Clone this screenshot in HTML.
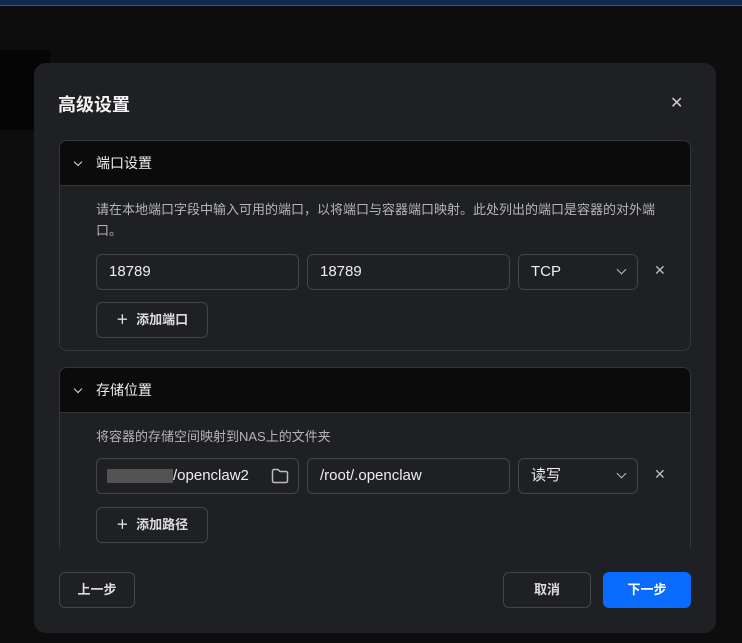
<!DOCTYPE html>
<html><head><meta charset="utf-8"><style>
*{box-sizing:border-box;margin:0;padding:0}
body{width:742px;height:643px;background:#0d0d0d;position:relative;overflow:hidden;font-family:"Liberation Sans","Noto Sans CJK SC",sans-serif;color:#e6e6e6}
.top{position:absolute;left:0;top:0;width:742px;height:6px;background:#0f2a4a;border-bottom:1px solid #2c5b8c}
.bgpanel{position:absolute;left:0;top:50px;width:50px;height:80px;background:#050505}
.modal{position:absolute;left:34px;top:63px;width:682px;height:570px;background:#1f2023;border-radius:12px;overflow:hidden}
.title{position:absolute;left:24px;top:28px;font-size:18px;font-weight:bold;color:#f2f2f2}
.close{position:absolute;left:636px;top:30px;font-size:16px;color:#ccc}
.sec{position:absolute;left:25px;width:632px;border:1px solid #35363a;border-radius:8px;overflow:hidden}
.hd{height:45px;background:#0b0b0c;border-bottom:1px solid #35363a;font-size:14px;line-height:45px;padding-left:36px;position:relative;color:#eee}
.hd:before{content:"";position:absolute;left:15px;top:18px;width:5px;height:5px;border-right:1.5px solid #ddd;border-bottom:1.5px solid #ddd;transform:rotate(45deg)}
.desc{position:absolute;left:36px;font-size:13px;color:#b5b5b5;line-height:21px;width:580px}
.inp{position:absolute;height:36px;border:1px solid #444549;border-radius:6px;font-size:15px;line-height:34px;padding-left:12px;color:#eee}
.chev{position:absolute;right:12px;top:11px;width:7px;height:7px;border-right:1.5px solid #bbb;border-bottom:1.5px solid #bbb;transform:rotate(45deg)}
.x{position:absolute;font-size:14px;color:#bbb}
.btn{position:absolute;height:36px;border:1px solid #444549;border-radius:6px;font-size:13px;font-weight:bold;line-height:34px;text-align:center;color:#ddd}
</style></head><body>
<div class="top"></div><div class="bgpanel"></div>
<div class="modal">
<div class="title">高级设置</div>
<div class="close">✕</div>
<div class="sec" style="top:77px;height:211px">
<div class="hd">端口设置</div>
<div class="desc" style="top:58px">请在本地端口字段中输入可用的端口，以将端口与容器端口映射。此处列出的端口是容器的对外端口。</div>
<div class="inp" style="left:36px;top:113px;width:203px">18789</div>
<div class="inp" style="left:247px;top:113px;width:203px">18789</div>
<div class="inp" style="left:458px;top:113px;width:120px">TCP<span class="chev"></span></div>
<div class="x" style="left:594px;top:121px">✕</div>
<div class="btn" style="left:36px;top:161px;width:112px">＋&nbsp; 添加端口</div>
</div>
<div class="sec" style="top:304px;height:300px">
<div class="hd">存储位置</div>
<div class="desc" style="top:58px">将容器的存储空间映射到NAS上的文件夹</div>
<div class="inp" style="left:36px;top:90px;width:203px;padding-left:10px"><span style="display:inline-block;width:66px;height:14px;background:#6a6a6a;vertical-align:middle;opacity:.7"></span>/openclaw2<svg style="position:absolute;right:9px;top:9px" width="18" height="16" viewBox="0 0 18 16" fill="none" stroke="#bbb" stroke-width="1.5"><path d="M1.5 3a1.5 1.5 0 0 1 1.5-1.5h4l2 2h6a1.5 1.5 0 0 1 1.5 1.5v8a1.5 1.5 0 0 1-1.5 1.5H3A1.5 1.5 0 0 1 1.5 13z"/></svg></div>
<div class="inp" style="left:247px;top:90px;width:203px">/root/.openclaw</div>
<div class="inp" style="left:458px;top:90px;width:120px">读写<span class="chev"></span></div>
<div class="x" style="left:594px;top:98px">✕</div>
<div class="btn" style="left:36px;top:139px;width:112px">＋&nbsp; 添加路径</div>
</div>
<div style="position:absolute;left:0;top:485px;width:682px;height:90px;background:#1f2023"></div>
<div class="btn" style="left:25px;top:509px;width:76px">上一步</div>
<div class="btn" style="left:469px;top:509px;width:88px">取消</div>
<div class="btn" style="left:569px;top:509px;width:88px;background:#0a6cff;border-color:#0a6cff;color:#fff">下一步</div>
</div>
</body></html>
